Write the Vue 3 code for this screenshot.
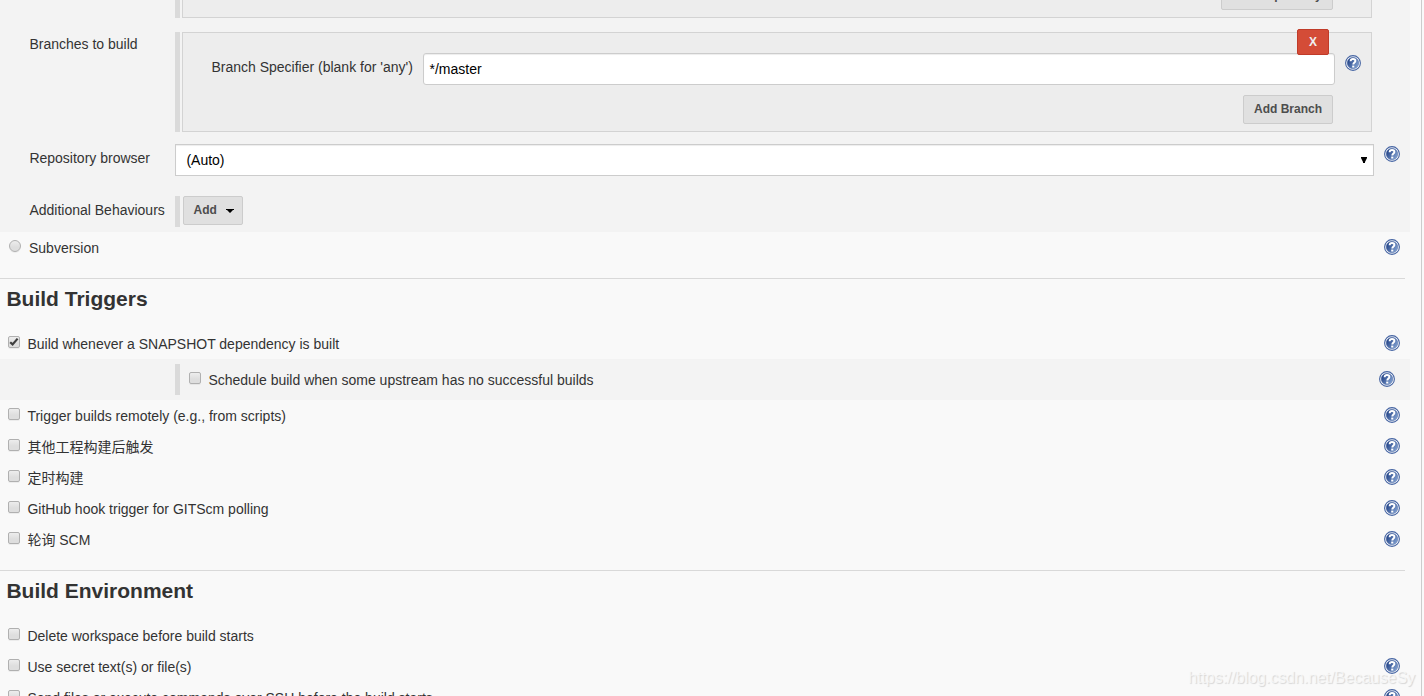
<template>
  <div class="page">
    <div class="content">
      <div class="scm">
        <div class="scm-row row-repo">
          <div class="scm-label"></div>
          <div class="handle"></div>
          <div class="chunk chunk-repo">
            <button class="btn btn-repo">Add Repository</button>
          </div>
        </div>

        <div class="scm-row row-branches">
          <div class="scm-label label-branches">Branches to build</div>
          <div class="handle"></div>
          <div class="chunk chunk-branch">
            <button class="btn-delete">X</button>
            <div class="branch-line">
              <span class="branch-label">Branch Specifier (blank for 'any')</span>
              <input class="branch-input" type="text" v-model="branch" />
              <svg class="help" viewBox="0 0 16 16"><use href="#help-icon" /></svg>
            </div>
            <div class="branch-actions">
              <button class="btn">Add Branch</button>
            </div>
          </div>
        </div>

        <div class="scm-row row-browser">
          <div class="scm-label label-browser">Repository browser</div>
          <div class="select">
            <span>(Auto)</span>
            <svg class="select-arrow" viewBox="0 0 6 6"><path d="M0 0H6V1L4 5V6H2V5L0 1Z" /></svg>
          </div>
          <svg class="help" viewBox="0 0 16 16"><use href="#help-icon" /></svg>
        </div>

        <div class="scm-row row-behaviours">
          <div class="scm-label label-behaviours">Additional Behaviours</div>
          <div class="handle"></div>
          <button class="btn btn-add">
            Add
            <svg class="caret" viewBox="0 0 8 4"><path d="M0 0H8V1H7L4 4L1 1H0Z" /></svg>
          </button>
        </div>
      </div>

      <div class="option option-radio">
        <span class="radio"></span>
        <span class="option-label">Subversion</span>
        <svg class="help" viewBox="0 0 16 16"><use href="#help-icon" /></svg>
      </div>

      <section v-for="section in sections" :key="section.title" class="section">
        <h2 class="section-title">{{ section.title }}</h2>
        <div
          v-for="item in section.items"
          :key="item.label"
          class="option"
          :class="{ nested: item.nested }"
        >
          <span v-if="item.nested" class="handle"></span>
          <span class="check" @click="item.checked = !item.checked">
            <svg v-if="item.checked" class="tick" viewBox="0 0 10 10">
              <path d="M1.2 5.2L3.6 7.4L8.6 1.6" />
            </svg>
          </span>
          <span class="option-label">{{ item.label }}</span>
          <svg v-if="item.help" class="help" viewBox="0 0 16 16"><use href="#help-icon" /></svg>
        </div>
      </section>
    </div>

    <div class="watermark">https://blog.csdn.net/BecauseSy</div>

    <svg class="defs" width="0" height="0">
      <defs>
        <linearGradient id="help-fill" x1="0" y1="0.2" x2="1" y2="0.8">
          <stop offset="0.1" stop-color="#27478a" />
          <stop offset="1" stop-color="#86a5d4" />
        </linearGradient>
        <symbol id="help-icon" viewBox="0 0 16 16">
          <circle cx="8" cy="8" r="7.4" fill="#fff" stroke="#4564a2" stroke-width="1.1" />
          <circle cx="8" cy="8" r="5.8" fill="url(#help-fill)" stroke="#3a5a9a" stroke-width="0.4" />
          <path
            d="M5.6 6.2C5.7 4.7 6.6 4 8 4C9.5 4 10.4 4.8 10.4 5.9C10.4 7.5 8.3 7.5 8.3 9.5"
            fill="none"
            stroke="#fff"
            stroke-width="1.9"
          />
          <rect x="7.2" y="10.6" width="2.1" height="1.9" fill="#fff" />
        </symbol>
      </defs>
    </svg>
  </div>
</template>

<script setup>
import { ref } from 'vue'

const branch = ref('*/master')

const sections = ref([
  {
    title: 'Build Triggers',
    items: [
      { label: 'Build whenever a SNAPSHOT dependency is built', checked: true, help: true },
      { label: 'Schedule build when some upstream has no successful builds', nested: true, help: true },
      { label: 'Trigger builds remotely (e.g., from scripts)', help: true },
      { label: '其他工程构建后触发', help: true },
      { label: '定时构建', help: true },
      { label: 'GitHub hook trigger for GITScm polling', help: true },
      { label: '轮询 SCM', help: true }
    ]
  },
  {
    title: 'Build Environment',
    items: [
      { label: 'Delete workspace before build starts' },
      { label: 'Use secret text(s) or file(s)', help: true },
      { label: 'Send files or execute commands over SSH before the build starts', help: true }
    ]
  }
])
</script>

<style>
body {
  margin: 0;
  overflow: hidden;
}
</style>

<style scoped>
.page {
  position: relative;
  height: 696px;
  overflow: hidden;
  background: #f9f9f9;
  font-family: "Liberation Sans", Arial, "Noto Sans CJK SC", sans-serif;
  font-size: 14px;
  line-height: 16px;
  color: #333;
}
.page * {
  box-sizing: border-box;
}
.content {
  width: 1422px;
  height: 696px;
  overflow: hidden;
  border-right: 1px solid #ccc;
}
.help {
  flex: none;
  width: 16px;
  height: 16px;
}
.handle {
  flex: none;
  width: 5px;
  background: #dadada;
}

/* git settings */
.scm {
  width: 1410px;
  height: 232px;
  background: #f3f3f3;
}
.scm-row {
  display: flex;
}
.scm-label {
  flex: none;
  width: 175px;
  padding-left: 29.4px;
  white-space: nowrap;
}
.chunk {
  width: 1190px;
  margin-left: 2px;
  border: 1px solid #d3d3d3;
  background: #ededed;
}
.row-repo {
  height: 18px;
}
.chunk-repo {
  display: flex;
  justify-content: flex-end;
  align-items: flex-end;
  border-top: none;
  padding: 0 38px 7px 0;
}
.row-branches {
  height: 100px;
  margin-top: 14px;
}
.label-branches {
  padding-top: 4px;
}
.chunk-branch {
  position: relative;
  padding-top: 20px;
}
.branch-line {
  display: flex;
  align-items: flex-start;
  padding-left: 28.4px;
}
.branch-label {
  width: 211.6px;
  padding-top: 6px;
  white-space: nowrap;
}
.branch-input {
  width: 912px;
  height: 32px;
  padding: 0 5.5px 1px;
  border: 1px solid #ccc;
  border-radius: 3px;
  background: #fff;
  box-shadow: inset 0 1px 1px rgba(0, 0, 0, 0.075);
  font: inherit;
  color: #000;
  outline: none;
}
.branch-line .help {
  margin: 2px 0 0 10px;
}
.branch-actions {
  display: flex;
  justify-content: flex-end;
  padding: 10px 38px 0 0;
}
.btn {
  flex: none;
  height: 29px;
  padding: 0 10px 2px;
  border: 1px solid #ccc;
  border-radius: 2px;
  background: #e0e0e0;
  font: bold 12px/14px "Liberation Sans", Arial, sans-serif;
  color: #4d4d4d;
}
.btn-repo {
  width: 112px;
  padding: 0 0 2px;
}
.btn-delete {
  position: absolute;
  top: -4px;
  right: 42px;
  width: 32px;
  height: 26px;
  padding: 0 0 1px;
  border: 1px solid #c03b29;
  border-radius: 2px;
  background: #d44c37;
  font: bold 12px/14px "Liberation Sans", Arial, sans-serif;
  color: #f0f0f0;
}
.row-browser {
  height: 32px;
  margin-top: 12px;
}
.label-browser {
  padding-top: 6px;
}
.select {
  display: flex;
  align-items: center;
  justify-content: space-between;
  width: 1199px;
  padding: 0 6px 0 10.4px;
  border: 1px solid #ccc;
  background: #fff;
  box-shadow: inset 0 1px 1px rgba(0, 0, 0, 0.075);
  color: #000;
}
.select-arrow {
  width: 6px;
  height: 6px;
}
.row-browser .help {
  margin: 2px 0 0 10px;
}
.row-behaviours {
  height: 31px;
  margin-top: 20px;
}
.label-behaviours {
  padding-top: 6px;
}
.btn-add {
  display: flex;
  align-items: center;
  gap: 9px;
  width: 60px;
  margin-left: 3px;
  padding: 0 8px 2px 9.6px;
}
.caret {
  flex: none;
  width: 8px;
  height: 4px;
  margin-top: 3px;
  fill: #000;
}

/* options */
.option {
  display: flex;
  width: 1410px;
  height: 31px;
  padding: 7px 10px 0 8px;
}
.option-label {
  padding-top: 1px;
  margin-left: 7.4px;
  white-space: nowrap;
}
.option .help {
  margin-left: auto;
}
.option-radio {
  padding-left: 9px;
}
.option-radio .option-label {
  margin-left: 8px;
}
.radio,
.check {
  flex: none;
  width: 12px;
  height: 12px;
  margin-top: 1px;
  border: 1px solid #b0b0b0;
  border-radius: 2px;
  background: linear-gradient(#ededed, #dedede 60%);
  box-shadow: 0 1px 0 rgba(0, 0, 0, 0.05);
}
.radio {
  border-radius: 50%;
}
.tick {
  display: block;
  width: 10px;
  height: 10px;
  fill: none;
  stroke: #3f3f3f;
  stroke-width: 2.2;
}
.nested {
  height: 41px;
  padding: 5px 15px 5px 175px;
  background: #f3f3f3;
}
.nested .handle {
  height: 31px;
}
.nested .check {
  margin: 8px 0 0 9px;
}
.nested .option-label {
  padding-top: 8px;
}
.nested .help {
  margin-top: 7px;
}

.section {
  margin-top: 15px;
}
.section-title {
  width: 1405px;
  height: 50px;
  margin: 0;
  padding: 8px 0 0 6.4px;
  border-top: 1px solid #d9d9d9;
  font-size: 21px;
  line-height: 24px;
}

.watermark {
  position: absolute;
  right: 9px;
  bottom: 9px;
  font-size: 16px;
  line-height: 18px;
  letter-spacing: -0.06px;
  color: rgba(250, 250, 250, 0.75);
  text-shadow: 1px 1px 1px rgba(0, 0, 0, 0.14);
}
.defs {
  position: absolute;
}
</style>
